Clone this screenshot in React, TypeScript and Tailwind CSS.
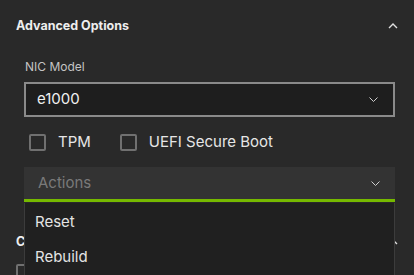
import { useState } from 'react'

const ChevronDown = () => (
  <svg width="9" height="5" viewBox="0 0 9 5" fill="none">
    <path d="M0.5 0.5l4 4 4-4" stroke="#cfcfcf" strokeWidth="1" />
  </svg>
)

const ChevronUp = () => (
  <svg width="10" height="6" viewBox="0 0 10 6" fill="none">
    <path d="M1 5l4-4 4 4" stroke="#e0e0e0" strokeWidth="1.4" />
  </svg>
)

const Checkbox = ({ label }: { label: string }) => (
  <label className="flex items-center gap-3">
    <span className="h-[17px] w-[17px] rounded-[2px] border-2 border-[#707070]" />
    <span className="text-[15px] text-[#e6e6e6]">{label}</span>
  </label>
)

const App = () => {
  const [open] = useState(true)

  return (
    <div
      className="relative h-[275px] w-[414px] overflow-hidden bg-[#292929]"
      style={{ fontFamily: 'Inter, "Noto Sans", sans-serif' }}
    >
      {/* Advanced Options */}
      <div className="mt-[18px] flex h-[16px] items-center justify-between pl-4 pr-[16px]">
        <span className="text-[12.5px] font-bold text-[#eeeeee]">Advanced Options</span>
        <ChevronUp />
      </div>

      <div className="flex flex-col pl-6 pr-[19px]">
        <span className="mt-[25px] ml-px text-[12px] leading-[16px] text-[#c4c4c4]">NIC Model</span>
        <div className="mt-[7px] flex h-[35px] items-center justify-between border-2 border-[#8a8a8a] bg-[#1e1e1e] pl-[11px] pr-[15px]">
          <span className="text-[15px] text-[#f0f0f0]">e1000</span>
          <ChevronDown />
        </div>

        <div className="mt-[17px] flex h-[17px] items-center gap-[29px] pl-[5px]">
          <Checkbox label="TPM" />
          <Checkbox label="UEFI Secure Boot" />
        </div>

        <div className="mt-[16px] flex h-[35px] items-center justify-between border-b-[3px] border-[#76b900] bg-[#333333] pl-[14px] pr-[15px]">
          <span className="text-[15px] text-[#7a7a7a]">Actions</span>
          <ChevronDown />
        </div>
      </div>

      {/* next section, partly hidden by the menu */}
      <div className="mt-[32px] flex h-[16px] items-center justify-between pl-4 pr-[16px]">
        <span className="text-[12.5px] font-bold text-[#eeeeee]">Cloud-init</span>
        <ChevronUp />
      </div>
      <div className="mt-[14px] pl-4">
        <span className="block h-[17px] w-[17px] rounded-[2px] border-2 border-[#707070]" />
      </div>

      {open && (
        <div className="absolute left-6 top-[203px] w-[371px] border border-t-0 border-[#3c3c3c] bg-[#202020] pb-2">
          <div className="flex h-[37px] items-center pl-[10px] pt-[2px] text-[15px] text-[#e4e4e4]">Reset</div>
          <div className="flex h-[35px] items-center pl-[10px] text-[15px] text-[#e4e4e4]">Rebuild</div>
        </div>
      )}
    </div>
  )
}

export default App
